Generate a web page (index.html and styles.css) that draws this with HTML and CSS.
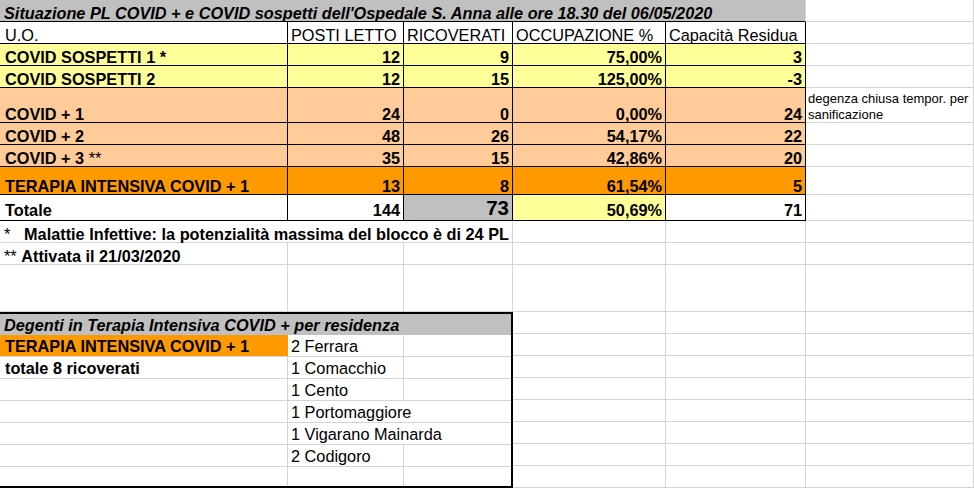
FILE: index.html
```html
<!DOCTYPE html>
<html lang="it">
<head>
<meta charset="utf-8">
<title>Situazione PL COVID - Ospedale S. Anna</title>
<link rel="stylesheet" href="styles.css">
</head>
<body>
<div class="sheet">
  <div class="c title">Situazione PL COVID + e COVID sospetti dell'Ospedale S. Anna alle ore 18.30 del 06/05/2020</div>
  <div class="c"></div>

  <div class="c k hd first">U.O.</div>
  <div class="c k hd">POSTI LETTO</div>
  <div class="c k hd">RICOVERATI</div>
  <div class="c k hd">OCCUPAZIONE %</div>
  <div class="c k hd">Capacità Residua</div>
  <div class="c"></div>

  <div class="c k y lbl">COVID SOSPETTI 1 *</div>
  <div class="c k y num">12</div>
  <div class="c k y num">9</div>
  <div class="c k y num">75,00%</div>
  <div class="c k y num">3</div>
  <div class="c"></div>

  <div class="c k y lbl">COVID SOSPETTI 2</div>
  <div class="c k y num">12</div>
  <div class="c k y num">15</div>
  <div class="c k y num">125,00%</div>
  <div class="c k y num">-3</div>
  <div class="c"></div>

  <div class="c k p lbl">COVID + 1</div>
  <div class="c k p num">24</div>
  <div class="c k p num">0</div>
  <div class="c k p num">0,00%</div>
  <div class="c k p num">24</div>
  <div class="c note">degenza chiusa tempor. per<br>sanificazione</div>

  <div class="c k p lbl">COVID + 2</div>
  <div class="c k p num">48</div>
  <div class="c k p num">26</div>
  <div class="c k p num">54,17%</div>
  <div class="c k p num">22</div>
  <div class="c"></div>

  <div class="c k p lbl">COVID + 3&nbsp;<span class="thin">**</span></div>
  <div class="c k p num">35</div>
  <div class="c k p num">15</div>
  <div class="c k p num">42,86%</div>
  <div class="c k p num">20</div>
  <div class="c"></div>

  <div class="c k o lbl tall">TERAPIA INTENSIVA COVID + 1</div>
  <div class="c k o num tall">13</div>
  <div class="c k o num tall">8</div>
  <div class="c k o num tall">61,54%</div>
  <div class="c k o num tall">5</div>
  <div class="c"></div>

  <div class="c k lbl tot">Totale</div>
  <div class="c k num tot">144</div>
  <div class="c k g num tot big">73</div>
  <div class="c k y num tot">50,69%</div>
  <div class="c k num tot">71</div>
  <div class="c"></div>

  <div class="c foot span3"><span class="thin star1">*</span><b>Malattie Infettive: la potenzialità massima del blocco è di 24 PL</b></div>
  <div class="c"></div>
  <div class="c"></div>
  <div class="c"></div>

  <div class="c foot"><span class="thin">**</span>&nbsp;<b>Attivata il 21/03/2020</b></div>
  <div class="c"></div>
  <div class="c"></div>
  <div class="c"></div>
  <div class="c"></div>
  <div class="c"></div>

  <div class="c"></div>
  <div class="c"></div>
  <div class="c"></div>
  <div class="c"></div>
  <div class="c"></div>
  <div class="c"></div>

  <div class="box">
    <div class="bc bhead">Degenti in Terapia Intensiva COVID + per residenza</div>
    <div class="bc o lbl nr">TERAPIA INTENSIVA COVID + 1</div>
    <div class="bc">2 Ferrara</div>
    <div class="bc nr"></div>
    <div class="bc lbl">totale 8 ricoverati</div>
    <div class="bc">1 Comacchio</div>
    <div class="bc nr"></div>
    <div class="bc"></div>
    <div class="bc">1 Cento</div>
    <div class="bc nr"></div>
    <div class="bc"></div>
    <div class="bc span2 nr">1 Portomaggiore</div>
    <div class="bc"></div>
    <div class="bc span2 nr">1 Vigarano Mainarda</div>
    <div class="bc"></div>
    <div class="bc">2 Codigoro</div>
    <div class="bc nr"></div>
    <div class="bc nb"></div>
    <div class="bc nb"></div>
    <div class="bc nb nr"></div>
  </div>

  <div class="c"></div><div class="c"></div><div class="c"></div>
  <div class="c"></div><div class="c"></div><div class="c"></div>
  <div class="c"></div><div class="c"></div><div class="c"></div>
  <div class="c"></div><div class="c"></div><div class="c"></div>
  <div class="c"></div><div class="c"></div><div class="c"></div>
  <div class="c"></div><div class="c"></div><div class="c"></div>
  <div class="c"></div><div class="c"></div><div class="c"></div>
  <div class="c"></div><div class="c"></div><div class="c"></div>
</div>
</body>
</html>
```

FILE: styles.css
```css
* {
  box-sizing: border-box;
}

html,
body {
  margin: 0;
  padding: 0;
  background: #ffffff;
}

body {
  font-family: "Liberation Sans", Arial, sans-serif;
  font-size: 16.3px;
  color: #000000;
}

.sheet {
  display: grid;
  grid-template-columns: 288px 116px 109px 153px 140px 168px;
  grid-template-rows: 22px 22px 22px 22px 35px 22px 22px 28px 26px 22px 22px 47px repeat(8, 22px);
}

.c,
.bc {
  display: flex;
  align-items: flex-end;
  padding: 0 3px;
  line-height: 16px;
  white-space: nowrap;
  border-right: 1px solid #d4d4d4;
  border-bottom: 1px solid #d4d4d4;
  min-width: 0;
}

.bc {
  padding-bottom: 2px;
}

.title {
  grid-column: span 5;
  background: #c0c0c0;
  font-weight: bold;
  font-style: italic;
  padding-left: 4px;
  border-bottom-color: #000000;
}

.k {
  border-right-color: #000000;
  border-bottom-color: #000000;
}

.hd {
  font-weight: normal;
}

.first {
  padding-left: 5px;
}

.lbl {
  font-weight: bold;
  padding-left: 5px;
}

.num {
  font-weight: bold;
  justify-content: flex-end;
}

.y {
  background: #ffff99;
}

.p {
  background: #ffcc99;
}

.o {
  background: #ff9900;
}

.g {
  background: #c0c0c0;
}

.thin {
  font-weight: normal;
}

.tall {
  padding-bottom: 0;
}

.tot {
  padding-bottom: 2px;
}

.big {
  font-size: 20.5px;
  line-height: 20px;
}

.note {
  display: block;
  padding: 3px 0 0 2px;
  font-size: 13px;
  line-height: 16px;
}

.foot {
  padding-left: 4px;
}

.span3 {
  grid-column: span 3;
}

.star1 {
  display: inline-block;
  width: 21px;
}

.box {
  grid-column: 1 / 4;
  grid-row: 13 / 21;
  display: grid;
  grid-template-columns: 288px 116px 107px;
  grid-template-rows: 21px 22px 22px 22px 22px 22px 22px 19px;
  border-top: 2px solid #000000;
  border-right: 2px solid #000000;
  border-bottom: 2px solid #000000;
}

.bhead {
  grid-column: span 3;
  background: #c0c0c0;
  font-weight: bold;
  font-style: italic;
  padding-left: 4px;
  padding-bottom: 2px;
  border: none;
}

.span2 {
  grid-column: span 2;
}

.nr {
  border-right: none;
}

.nb {
  border-bottom: none;
}
```
